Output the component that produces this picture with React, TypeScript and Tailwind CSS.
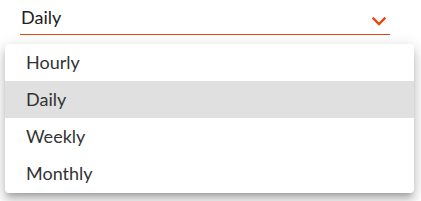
import React from "react";

const items = ["Hourly", "Daily", "Weekly", "Monthly"];

export default function App() {
  return (
    <div className="relative w-[421px] h-[201px] bg-white font-['Lato','Noto_Sans',sans-serif]">
      <div className="ml-[20px] w-[370px] pt-[5px] pb-[5px] border-b border-[#e8470e] flex items-start justify-between">
        <span className="pl-[1px] text-[18px] leading-[24px] text-[#212121]">Daily</span>
        <svg
          className="mt-[12px] mr-[4px]"
          width="14"
          height="9"
          viewBox="0 0 14 9"
          fill="none"
        >
          <path d="M1.5 1.5 L7 7 L12.5 1.5" stroke="#e8470e" strokeWidth="2.4" strokeLinecap="square" />
        </svg>
      </div>
      <div className="absolute left-[5px] top-[44px] w-[409px] pb-[1px] bg-white rounded-[4px] shadow-[0_5px_5px_-3px_rgba(0,0,0,0.2),0_8px_10px_1px_rgba(0,0,0,0.14),0_3px_14px_2px_rgba(0,0,0,0.12)]">
        {items.map((it) => (
          <div
            key={it}
            className={
              "h-[37px] flex items-center pl-[21px] text-[18px] text-[#333333] " +
              (it === "Daily" ? "bg-[#e0e0e0]" : "")
            }
          >
            {it}
          </div>
        ))}
      </div>
    </div>
  );
}
